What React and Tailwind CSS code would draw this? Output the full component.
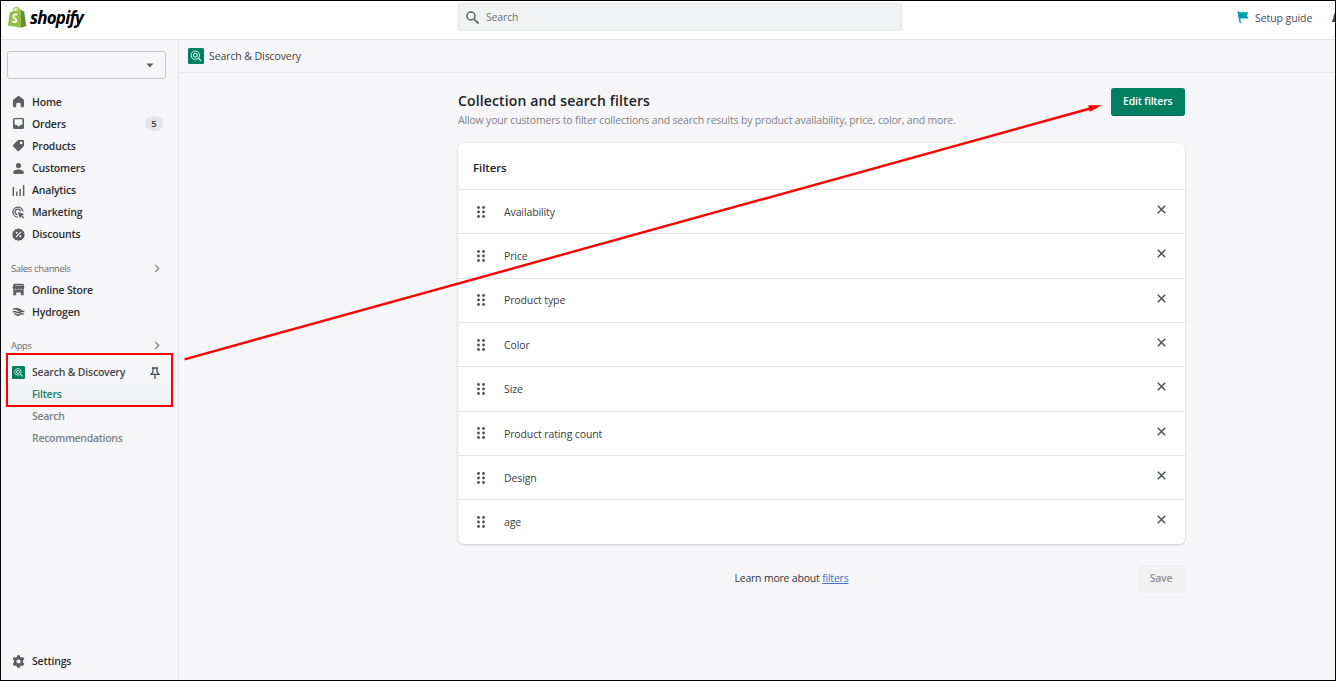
import clsx from "clsx";

const icons = {
    home: <path d="M9.3 1.4a1.1 1.1 0 0 1 1.4 0l7 5.6c.5.4.8 1 .8 1.7v8.3c0 1-.8 1.8-1.8 1.8h-2.2c-.6 0-1-.4-1-1v-3.6c0-1.2-1-2.2-2.2-2.2h-2.600c-1.200 0-2.200 1-2.200 2.200v3.600c0 .6-.4 1-1 1H3.300c-1 0-1.800-.8-1.800-1.800V8.700c0-.7.3-1.300.8-1.700l7-5.600z" />,
    orders: (
        <path
            fillRule="evenodd"
            d="M4 1.500h12a2.500 2.500 0 0 1 2.500 2.500v12a2.500 2.500 0 0 1-2.500 2.500H4A2.500 2.500 0 0 1 1.500 16V4A2.500 2.500 0 0 1 4 1.500zM4 3.500v8.500h2.500c.6 0 .9.400 1.200 1 .4.800 1.100 1.300 2.300 1.300s1.900-.5 2.300-1.300c.3-.6.600-1 1.200-1H16V3.500H4z"
        />
    ),
    products: (
        <path
            fillRule="evenodd"
            d="M10.400 1.500h6.600c.9 0 1.500.6 1.500 1.500v6.600c0 .7-.2 1.300-.7 1.800l-6.500 6.600c-.9.900-2.200.9-3.100 0L1.900 11.700c-.8-.8-.8-2.200 0-3L8.600 2.200c.5-.5 1.100-.7 1.800-.7zM14 8a2 2 0 1 0 0-4 2 2 0 0 0 0 4z"
        />
    ),
    customers: (
        <>
            <circle cx="10" cy="5.500" r="4" />
            <path d="M10 11.500c-4.500 0-8.300 1.800-8.300 4.800 0 1.500 1.200 2.200 2.300 2.200h12c1.100 0 2.300-.7 2.300-2.200 0-3-3.800-4.800-8.300-4.800z" />
        </>
    ),
    analytics: <path d="M1 4.500h2.200v14H1zM6.300 11.500h2.200v7H6.300zM11.500 7.500h2.200v11h-2.200zM16.800 1.500H19v17h-2.200z" />,
    marketing: (
        <>
            <path
                fill="none"
                stroke="currentColor"
                strokeWidth="2"
                d="M9 17A7.700 7.700 0 1 1 16.800 8.500M8.300 13.200A4.300 4.300 0 1 1 13.300 8.300"
            />
            <path d="M8.800 8.800l10.400 3.700-3.900 1.800 3.500 3.500-1.400 1.400-3.500-3.500-1.700 3.800z" />
        </>
    ),
    discounts: (
        <>
            <path d="M10 .5l2.400 1.500 2.800-.2 1.200 2.500 2.500 1.300-.2 2.700 1 1.700-1 2.200.2 2.700-2.500 1.300-1.200 2.500-2.800-.2L10 20l-2.400-1.500-2.800.2-1.200-2.500-2.500-1.300.2-2.700-1-2.200 1-1.700-.2-2.700 2.500-1.300 1.200-2.500 2.800.2z" />
            <path fill="none" stroke="#f6f6f8" strokeWidth="1.700" d="M6 14.200L14 5.800" />
            <circle cx="7.200" cy="7.200" r="1.500" fill="#f6f6f8" />
            <circle cx="12.800" cy="12.800" r="1.500" fill="#f6f6f8" />
        </>
    ),
    store: (
        <path
            fillRule="evenodd"
            d="M2.500 1h15L19 7c0 1.600-1 2.800-2.400 2.800S14.300 8.700 14.300 7.500c0 1.200-.8 2.300-2.200 2.300-1.300 0-2.100-1-2.100-2.300 0 1.300-.8 2.300-2.100 2.300-1.400 0-2.200-1.100-2.200-2.300 0 1.200-.9 2.300-2.300 2.300S1 8.600 1 7zM2 10h16v9h-4.500v-4.500h-7V19H2zM4.500 3.300v1h11v-1z"
        />
    ),
    hydrogen: (
        <path
            fill="none"
            stroke="currentColor"
            strokeWidth="2.300"
            d="M1.500 6.500l4.500-1.200 4 3.200 4-1.500M7 5l5 2.500M1 10.500h5l3 1.500 5-2h5M4 13.500l5 2.500 4-2.500 5 .5M12 12l4-4"
        />
    ),
    settings: (
        <path
            fillRule="evenodd"
            d="M7.900.3h4.200l.6 2.700 1.500.9 2.800-.9 2 3.600-2.100 1.900v3l2.100 1.900-2 3.600-2.800-.9-1.500.9-.6 2.700H7.900l-.6-2.700-1.500-.9-2.800.9-2-3.600 2.100-1.900v-3L1 6.600 3 3l2.800.9L7.300 3zM10 13.200a3.200 3.200 0 1 0 0-6.400 3.200 3.200 0 0 0 0 6.400z"
        />
    ),
};

const Icon = ({ name }) => (
    <svg viewBox="0 0 20 20" fill="currentColor" className="w-[13px] h-[13px] shrink-0 text-[#5c5f62]">
        {icons[name]}
    </svg>
);

const AppIcon = ({ className }) => (
    <svg viewBox="0 0 16 16" className={clsx("shrink-0", className)}>
        <rect width="16" height="16" rx="1.500" fill="#008060" />
        <g fill="none" stroke="#d5efe6">
            <circle cx="7.300" cy="7.200" r="4.100" strokeWidth="1" />
            <circle cx="7.300" cy="7.200" r="1.900" strokeWidth="1.100" />
            <path d="M10.300 10.200L13 12.800" strokeWidth="1.400" />
        </g>
    </svg>
);

const Chevron = () => (
    <svg viewBox="0 0 6 9" className="w-[6px] h-[9px]" fill="none" stroke="#7b7e81" strokeWidth="1.200">
        <path d="M1 .8l3.700 3.700L1 8.200" />
    </svg>
);

const mainNav = [
    { label: "Home", icon: "home" },
    { label: "Orders", icon: "orders", badge: 5 },
    { label: "Products", icon: "products" },
    { label: "Customers", icon: "customers" },
    { label: "Analytics", icon: "analytics" },
    { label: "Marketing", icon: "marketing" },
    { label: "Discounts", icon: "discounts" },
];

const channels = [
    { label: "Online Store", icon: "store" },
    { label: "Hydrogen", icon: "hydrogen" },
];

const filters = ["Availability", "Price", "Product type", "Color", "Size", "Product rating count", "Design", "age"];

const NavItem = ({ item, className }) => (
    <div className={clsx("flex items-center pl-[11px] pr-[15px]", className)}>
        <Icon name={item.icon} />
        <span className="mt-[1.6px] ml-[7px] text-[10.5px] font-semibold tracking-[-0.18px] text-[#2b2e31]">{item.label}</span>
        {item.badge && (
            <span className="ml-auto w-[18px] h-[15px] rounded-full bg-[#e4e5e7] text-[9.5px] leading-[15px] text-center font-semibold text-[#3a3d40]">
                {item.badge}
            </span>
        )}
    </div>
);

const Section = ({ title }) => (
    <div className="h-[16px] pl-[10px] pr-[18px] flex items-center justify-between">
        <span className="mt-px text-[9.5px] tracking-[-0.36px] text-[#6a6d71]">{title}</span>
        <Chevron />
    </div>
);

const Header = () => (
    <header className="h-[39px] shrink-0 bg-white border-b border-[#dfe1e3] flex items-start">
        <div className="w-[457px] pl-[6px] pt-[5px] flex items-start">
            <svg viewBox="0 0 20 22" className="w-[20px] h-[22px]">
                <path d="M6 6C6 3.500 7.600 1.300 9.300 1.300S12.200 3 12.200 5.500" fill="none" stroke="#95bf47" strokeWidth="1.100" />
                <path d="M8.800 5.500C9 3.500 10 2 11.400 2c1 0 1.500.8 1.700 2.500" fill="none" stroke="#95bf47" strokeWidth="1" />
                <path d="M2.800 6.200L14 3.400v18.400L.8 19.500z" fill="#95bf47" />
                <path d="M14 3.400l1.300 1.500 1.900.3 2 14.900-5.200 1.700z" fill="#5e8e3e" />
                <path
                    d="M10.300 8.800c-1.900-.9-4-.1-4 1.600 0 2 3.200 2 3.100 4.100-.1 1.900-2.300 2.100-4.100.7"
                    fill="none"
                    stroke="#fff"
                    strokeWidth="1.800"
                />
            </svg>
            <span className="mt-px ml-[3px] text-[17px] leading-[22px] font-bold italic text-black tracking-[-0.8px]">shopify</span>
        </div>
        <div className="w-[444px] h-[28px] mt-[2px] px-[7px] flex items-center gap-[7px] rounded-[3px] bg-[#f1f2f3] border border-[#e3e5e7]">
            <svg viewBox="0 0 13 13" className="w-[13px] h-[13px]" fill="none" stroke="#5c5f62" strokeWidth="1.500">
                <circle cx="5" cy="5" r="4" />
                <path d="M8 8l4.500 4.500" strokeWidth="1.700" />
            </svg>
            <span className="mt-[2px] text-[10.5px] tracking-[-0.15px] text-[#6d7175]">Search</span>
        </div>
        <div className="ml-auto h-[34px] flex items-center">
            <svg viewBox="0 0 12 13" className="mb-[2px] w-[12px] h-[13px]" fill="#00a0ac">
                <path d="M.3.300h1.500l.2.900h9.300L10 4.200l1.300 3.400H3.200l.9 4.700H2.700z" />
            </svg>
            <span className="mt-px ml-[6px] w-[58px] text-[10.5px] tracking-[-0.08px] text-[#4a4d50] whitespace-nowrap">Setup guide</span>
            <svg viewBox="0 0 3 10" className="ml-[19px] w-[3px] h-[10px]" fill="#45484b">
                <path d="M3 0C1.500 1.500 1.500 6 0 8.500V9h3z" />
            </svg>
        </div>
    </header>
);

const Sidebar = () => (
    <aside className="w-[178px] shrink-0 border-r border-[#e1e3e5] flex flex-col">
        <div className="mt-[11px] ml-[6px] w-[159px] h-[28px] shrink-0 rounded-[3px] border border-[#c4c7ca] flex items-center justify-end pr-[11px]">
            <svg viewBox="0 0 8 5" className="w-[8px] h-[5px]" fill="#5c5f62">
                <path d="M.5.500h7L4 4.500z" />
            </svg>
        </div>
        <nav className="mt-[11.5px] flex flex-col">
            {mainNav.map((item) => (
                <NavItem key={item.label} item={item} className="h-[22.17px]" />
            ))}
        </nav>
        <div className="mt-[15px]">
            <Section title="Sales channels" />
            <div className="mt-[2px]">
                {channels.map((item) => (
                    <NavItem key={item.label} item={item} className="h-[22px]" />
                ))}
            </div>
        </div>
        <div className="mt-[15px]">
            <Section title="Apps" />
            <div className="mt-[8px] h-[22px] pl-[11px] pr-[18px] flex items-center">
                <AppIcon className="w-[13px] h-[13px]" />
                <span className="ml-[7px] text-[10.5px] font-semibold tracking-[-0.2px] text-[#44474a]">Search &amp; Discovery</span>
                <svg viewBox="0 0 10 12" className="ml-auto w-[10px] h-[12px]" fill="none" stroke="#4a4d50" strokeWidth="1.300">
                    <path d="M2 1h6M3 1v4L1.200 7.300h7.600L7 5V1M5 7.500V12" />
                </svg>
            </div>
            <div className="h-[22px] mr-[7px] ml-[6px] pl-[25px] flex items-center bg-[#f1f2f3] text-[10.5px] font-semibold tracking-[-0.25px] text-[#1a8061]">
                Filters
            </div>
            <div className="h-[22px] pl-[31px] flex items-center text-[10.5px] font-semibold tracking-[-0.3px] text-[#7d8083]">Search</div>
            <div className="h-[22px] pl-[31px] flex items-center text-[10.5px] font-semibold tracking-[-0.3px] text-[#7d8083]">
                Recommendations
            </div>
        </div>
        <div className="mt-auto mb-[8px]">
            <NavItem item={{ label: "Settings", icon: "settings" }} className="h-[22px]" />
        </div>
    </aside>
);

const FilterRow = ({ label }) => (
    <li className="h-[44.35px] border-t border-[#e1e3e5] flex items-center pl-[19px] pr-[18.5px]">
        <svg viewBox="0 0 8 12" className="w-[8px] h-[12px]" fill="#4f5255">
            {[1.5, 6, 10.5].map((y) => (
                <g key={y}>
                    <circle cx="1.500" cy={y} r="1.400" />
                    <circle cx="6.500" cy={y} r="1.400" />
                </g>
            ))}
        </svg>
        <span className="mt-[2px] ml-[19px] text-[10.5px] tracking-[-0.12px] text-[#3a3d40]">{label}</span>
        <svg viewBox="0 0 9 9" className="ml-auto mb-[4.5px] w-[9px] h-[9px]" fill="none" stroke="#55585b" strokeWidth="1.600">
            <path d="M.8.800l7.400 7.400M8.200.800L.8 8.200" />
        </svg>
    </li>
);

const App = () => {
    return (
        <div className="relative w-[1336px] h-[681px] overflow-hidden border border-black bg-[#f6f6f8] flex flex-col font-['Open_Sans','Noto_Sans',sans-serif] text-[#202223]">
            <Header />
            <div className="flex-1 flex min-h-0">
                <Sidebar />
                <main className="flex-1 min-w-0">
                    <div className="h-[32.5px] border-b border-[#e5e7e9] pl-[9px] flex items-center">
                        <AppIcon className="w-[16px] h-[16px]" />
                        <span className="mt-[2px] ml-[5px] text-[10.5px] tracking-[-0.09px] text-[#3f4245]">Search &amp; Discovery</span>
                    </div>
                    <div className="w-[726.5px] ml-[279px] pt-[15px]">
                        <div className="flex justify-between items-start">
                            <div className="pt-[3.5px]">
                                <h1 className="text-[14px] leading-[20px] font-semibold tracking-[0.14px] whitespace-nowrap">Collection and search filters</h1>
                                <p className="text-[10.5px] leading-[18px] tracking-[-0.17px] text-[#7f8286] whitespace-nowrap">
                                    Allow your customers to filter collections and search results by product availability, price, color, and more.
                                </p>
                            </div>
                            <button className="w-[73.5px] h-[28px] pt-px rounded-[3px] bg-[#008060] border-b border-[#006e52] text-white text-[10.5px] font-semibold tracking-[-0.2px] whitespace-nowrap">
                                Edit filters
                            </button>
                        </div>
                        <section className="mt-[13.5px] rounded-[6px] bg-white shadow-[0_0_3px_rgba(23,24,24,0.08),0_1px_2px_rgba(0,0,0,0.15)]">
                            <h2 className="h-[46.5px] pt-[3px] pl-[15px] flex items-center text-[11.5px] font-semibold tracking-[-0.1px]">Filters</h2>
                            <ul>
                                {filters.map((label) => (
                                    <FilterRow key={label} label={label} />
                                ))}
                            </ul>
                        </section>
                        <div className="mt-[21.5px] flex items-center justify-end">
                            <p className="mr-[289px] text-[10.5px] tracking-[-0.2px] text-[#33363a] whitespace-nowrap">
                                Learn more about <a className="text-[#4476c8] underline">filters</a>
                            </p>
                            <button className="w-[47px] h-[28px] rounded-[3px] bg-[#f1f1f1] text-[10.5px] font-semibold tracking-[-0.2px] text-[#8f9296]">
                                Save
                            </button>
                        </div>
                    </div>
                </main>
            </div>

            {/* annotation marks over the page */}
            <div className="absolute left-[5px] top-[352px] w-[167px] h-[54px] border-2 border-[#ff0000]" />
            <svg viewBox="0 0 1336 681" className="absolute -left-px -top-px w-[1336px] h-[681px] pointer-events-none">
                <path d="M184.500 359.300L1092 108" stroke="#ff0000" strokeWidth="2.400" />
                <path d="M1102 105.200l-12 6.500-1.800-6.400z" fill="#ff0000" />
            </svg>
        </div>
    );
};

export default App;
